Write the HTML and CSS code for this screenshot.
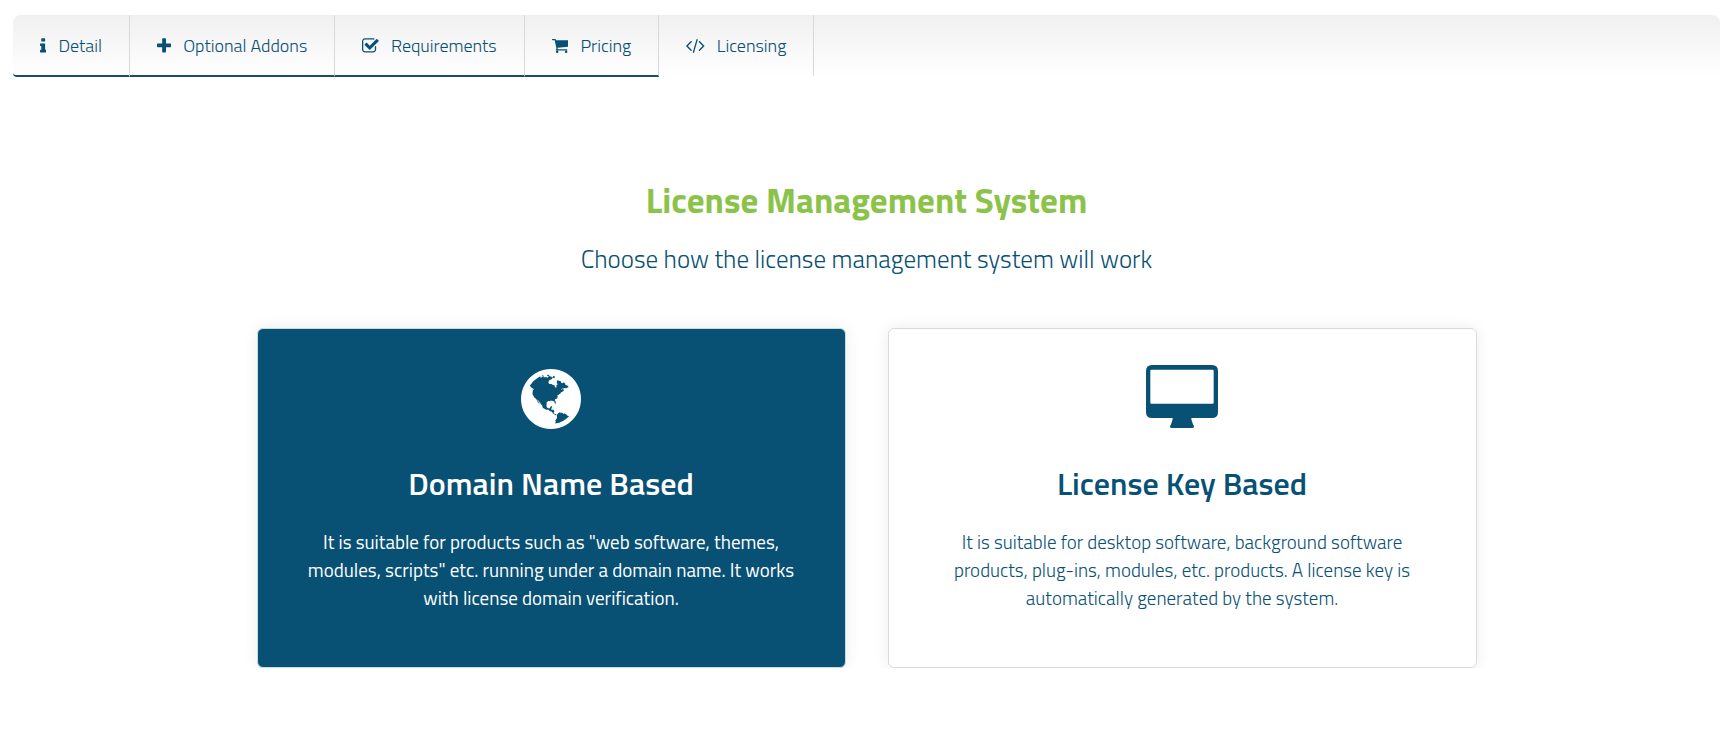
FILE: index.html
```html
<!DOCTYPE html>
<html lang="en">
  <head>
    <meta charset="UTF-8" />
    <meta name="viewport" content="width=device-width, initial-scale=1.0" />
    <title>License Management System</title>
    <link rel="stylesheet" href="styles.css">
  </head>
  <body>
    <nav class="tabs">
      <a class="tab" href="#detail">
        <svg class="tab-icon" viewBox="576 0 640 1792" aria-hidden="true"><path d="M1216 1344v128q0 26-19 45t-45 19h-512q-26 0-45-19t-19-45v-128q0-26 19-45t45-19h64v-384h-64q-26 0-45-19t-19-45v-128q0-26 19-45t45-19h384q26 0 45 19t19 45v576h64q26 0 45 19t19 45zm-128-1152v192q0 26-19 45t-45 19h-256q-26 0-45-19t-19-45v-192q0-26 19-45t45-19h256q26 0 45 19t19 45z"/></svg>
        Detail
      </a>
      <a class="tab" href="#addons">
        <svg class="tab-icon" viewBox="192 0 1408 1792" aria-hidden="true"><path d="M1600 736v192q0 40-28 68t-68 28h-416v416q0 40-28 68t-68 28h-192q-40 0-68-28t-28-68v-416h-416q-40 0-68-28t-28-68v-192q0-40 28-68t68-28h416v-416q0-40 28-68t68-28h192q40 0 68 28t28 68v416h416q40 0 68 28t28 68z"/></svg>
        Optional Addons
      </a>
      <a class="tab" href="#requirements">
        <svg class="tab-icon" viewBox="64 0 1664 1792" aria-hidden="true"><path d="M1472 930v318q0 119-84.5 203.5t-203.5 84.5h-832q-119 0-203.5-84.5t-84.5-203.5v-832q0-119 84.5-203.5t203.5-84.5h832q63 0 117 25 15 7 18 23 3 17-9 29l-49 49q-10 10-23 10-3 0-9-2-23-6-45-6h-832q-66 0-113 47t-47 113v832q0 66 47 113t113 47h832q66 0 113-47t47-113v-254q0-13 9-22l64-64q10-10 23-10 6 0 12 3 20 8 20 29zm231-489l-814 814q-24 24-57 24t-57-24l-430-430q-24-24-24-57t24-57l110-110q24-24 57-24t57 24l263 263 647-647q24-24 57-24t57 24l110 110q24 24 24 57t-24 57z"/></svg>
        Requirements
      </a>
      <a class="tab" href="#pricing">
        <svg class="tab-icon" viewBox="64 64 1664 1792" aria-hidden="true"><path d="M704 1536q0 52-38 90t-90 38-90-38-38-90 38-90 90-38 90 38 38 90zm896 0q0 52-38 90t-90 38-90-38-38-90 38-90 90-38 90 38 38 90zm128-1088v512q0 24-16.5 42.5t-40.5 21.5l-1044 122q13 60 13 70 0 16-24 64h920q26 0 45 19t19 45-19 45-45 19h-1024q-26 0-45-19t-19-45q0-11 8-31.5t16-36 21.5-40 15.5-29.5l-177-823h-204q-26 0-45-19t-19-45 19-45 45-19h256q16 0 28.5 6.5t19.5 15.5 13 24.5 8 26 5.5 29.5 4.5 26h1201q26 0 45 19t19 45z"/></svg>
        Pricing
      </a>
      <a class="tab active" href="#licensing">
        <svg class="tab-icon" viewBox="100 64 1840 1792" aria-hidden="true"><path d="M681 1399l-50 50q-10 10-23 10t-23-10l-466-466q-10-10-10-23t10-23l466-466q10-10 23-10t23 10l50 50q10 10 10 23t-10 23l-393 393 393 393q10 10 10 23t-10 23zm591-1067l-373 1291q-4 13-15.5 19.5t-23.5 2.5l-62-17q-13-4-19.5-15.5t-2.5-24.5l373-1291q4-13 15.5-19.5t23.5-2.5l62 17q13 4 19.5 15.5t2.5 24.5zm657 651l-466 466q-10 10-23 10t-23-10l-50-50q-10-10-10-23t10-23l393-393-393-393q-10-10-10-23t10-23l50-50q10-10 23-10t23 10l466 466q10 10 10 23t-10 23z"/></svg>
        Licensing
      </a>
    </nav>

    <main class="content">
      <h1>License Management System</h1>
      <p class="subtitle">Choose how the license management system will work</p>

      <div class="cards">
        <a class="card selected" href="#domain">
          <svg class="card-icon" viewBox="0 0 1792 1792" aria-hidden="true"><path d="M896 128q209 0 385.5 103t279.5 279.5 103 385.5-103 385.5-279.5 279.5-385.5 103-385.5-103-279.5-279.5-103-385.5 103-385.5 279.5-279.5 385.5-103zm274 521q-2 1-9.5 9.5t-13.5 9.5q2 0 4.5-5t5-11 3.5-7q6-7 22-15 14-6 52-12 34-8 51 11-2-2 9.5-13t14.5-12q3-2 15-4.5t15-7.5l2-22q-12 1-17.5-7t-6.5-21q0 2-6 8 0-7-4.5-8t-11.5 1-9 1q-10-3-15-7.5t-8-16.5-4-15q-2-5-9.5-11t-9.5-10q-1-2-2.5-5.5t-3-6.5-4-5.5-5.5-2.5-7 5-7.5 10-4.5 5q-3-2-6-1.5t-4.5 1-4.5 3-5 3.5q-3 2-8.5 3t-8.5 2q15-5-1-11-10-4-16-3 9-4 7.5-12t-8.5-14h5q-1-4-8.5-8.5t-17.5-8.5-13-6q-8-5-34-9.5t-33-.5q-5 6-4.5 10.5t4 14 3.5 12.5q1 6-5.5 13t-6.5 12q0 7 14 15.5t10 21.5q-3 8-16 16t-16 12q-5 8-1.5 18.5t10.5 16.5q2 2 1.5 4t-3.5 4.5-5.5 4-6.5 3.5l-3 2q-11 5-20.5-6t-13.5-26q-7-25-16-30-23-8-29 1-5-13-41-26-25-9-58-4 6-1 0-15-7-15-19-12 3-6 4-17.5t1-13.5q3-13 12-23 1-1 7-8.5t9.5-13.5.5-6q35 4 50-11 5-5 11.5-17t10.5-17q9-6 14-5.5t14.5 5.5 14.5 5q14 1 15.5-11t-7.5-20q12 1 3-17-4-7-8-9-12-4-27 5-8 4 2 8-1-1-9.5 10.5t-16.5 17.5-16-5q-1-1-5.5-13.5t-9.5-13.5q-8 0-16 15 3-8-11-15t-24-8q19-12-8-27-7-4-20.5-5t-19.5 4q-5 7-5.5 11.5t5 8 10.5 5.5 11.5 4 8.5 3q14 10 8 14-2 1-8.5 3.5t-11.5 4.5-6 4q-3 4 0 14t-2 14q-5-5-9-17.5t-7-16.5q7 9-25 6l-10-1q-4 0-16 2t-20.5 1-13.5-8q-4-8 0-20 1-4 4-2-4-3-11-9.5t-10-8.5q-46 15-94 41 6 1 12-1 5-2 13-6.5t10-5.5q34-14 42-7l5-5q14 16 20 25-7-4-30-1-20 6-22 12 7 12 5 18-4-3-11.5-10t-14.5-11-15-5q-16 0-22 1-146 80-235 222 7 7 12 8 4 1 5 9t2.5 11 11.5-3q9 8 3 19 1-1 44 27 19 17 21 21 3 11-10 18-1-2-9-9t-9-4q-3 5 .5 18.5t10.5 12.5q-7 0-9.5 16t-2.5 35.5-1 23.5l2 1q-3 12 5.5 34.5t21.5 19.5q-13 3 20 43 6 8 8 9 3 2 12 7.5t15 10 10 10.5q4 5 10 22.5t14 23.5q-2 6 9.5 20t10.5 23q-1 0-2.5 1t-2.5 1q3 7 15.5 14t15.5 13q1 3 2 10t3 11 8 2q2-20-24-62-15-25-17-29-3-5-5.5-15.5t-4.5-14.5q2 0 6 1.5t8.5 3.5 7.5 4 2 3q-3 7 2 17.5t12 18.5 17 19 12 13q6 6 14 19.5t0 13.5q9 0 20 10.5t17 19.5q5 8 8 26t5 24q2 7 8.5 13.5t12.5 9.5l16 8 13 7q5 2 18.5 10.5t21.5 11.5q10 4 16 4t14.5-2.5 13.5-3.5q15-2 29 15t21 21q36 19 55 11-2 1 .5 7.5t8 15.5 9 14.5 5.5 8.5q5 6 18 15t18 15q6-4 7-9-3 8 7 20t18 10q14-3 14-32-31 15-49-18 0-1-2.5-5.5t-4-8.5-2.5-8.5 0-7.5 5-3q9 0 10-3.5t-2-12.5-4-13q-1-8-11-20t-12-15q-5 9-16 8t-16-9q0 1-1.5 5.5t-1.5 6.5q-13 0-15-1 1-3 2.5-17.5t3.5-22.5q1-4 5.5-12t7.5-14.5 4-12.5-4.5-9.5-17.5-2.5q-19 1-26 20-1 3-3 10.5t-5 11.5-9 7q-7 3-24 2t-24-5q-13-8-22.5-29t-9.5-37q0-10 2.5-26.5t3-25-5.5-24.5q3-2 9-9.5t10-10.5q2-1 4.5-1.5t4.5 0 4-1.5 3-6q-1-1-4-3-3-3-4-3 7 3 28.5-1.5t27.5 1.5q15 11 22-2 0-1-2.5-9.5t-.5-13.5q5 27 29 9 3 3 15.5 5t17.5 5q3 2 7 5.5t5.5 4.5 5-.5 8.5-6.5q10 14 12 24 11 40 19 44 7 3 11 2t4.5-9.5 0-14-1.5-12.5l-1-8v-18l-1-8q-15-3-18.5-12t1.5-18.5 15-18.5q1-1 8-3.5t15.5-6.5 12.5-8q21-19 15-35 7 0 11-9-1 0-5-3t-7.5-5-4.5-2q9-5 2-16 5-3 7.5-11t7.5-10q9 12 21 2 7-8 1-16 5-7 20.5-10.5t18.5-9.5q7 2 8-2t1-12 3-12q4-5 15-9t13-5l17-11q3-4 0-4 18 2 31-11 10-11-6-20 3-6-3-9.5t-15-5.5q3-1 11.5-.5t10.5-1.5q15-10-7-16-17-5-43 12zm-163 877q206-36 351-189-3-3-12.5-4.5t-12.5-3.5q-18-7-24-8 1-7-2.5-13t-8-9-12.5-8-11-7q-2-2-7-6t-7-5.5-7.5-4.5-8.5-2-10 1l-3 1q-3 1-5.5 2.5t-5.5 3-4 3 0 2.5q-21-17-36-22-5-1-11-5.5t-10.5-7-10-1.5-11.5 7q-5 5-6 15t-2 13q-7-5 0-17.5t2-18.5q-3-6-10.5-4.5t-12 4.5-11.5 8.5-9 6.5-8.5 5.5-8.5 7.5q-3 4-6 12t-5 11q-2-4-11.5-6.5t-9.5-5.5q2 10 4 35t5 38q7 31-12 48-27 25-29 40-4 22 12 26 0 7-8 20.5t-7 21.5q0 6 2 16z"/></svg>
          <h2>Domain Name Based</h2>
          <p>It is suitable for products such as "web software, themes, modules, scripts" etc. running under a domain name. It works with license domain verification.</p>
        </a>
        <a class="card" href="#key">
          <svg class="card-icon" viewBox="0 -3 216 210" aria-hidden="true"><path fill-rule="evenodd" d="M18 0H198Q216 0 216 18V141Q216 159 198 159H136Q136 168 144 184Q145 189 139 189H77Q71 189 72 184Q80 168 80 159H18Q0 159 0 141V18Q0 0 18 0ZM16 14Q13 14 13 17V113Q13 116 16 116H200Q203 116 203 113V17Q203 14 200 14Z"/></svg>
          <h2>License Key Based</h2>
          <p>It is suitable for desktop software, background software products, plug-ins, modules, etc. products. A license key is automatically generated by the system.</p>
        </a>
      </div>
    </main>
  </body>
</html>
```

FILE: styles.css
```css
body {
  margin: 0;
  padding: 15px 15px 0 13px;
  background: #fff;
  color: #085174;
  font-family: "Titillium Web", Roboto, sans-serif;
  font-size: 18px;
  font-weight: 300;
}

a {
  color: inherit;
  text-decoration: none;
}

svg {
  display: block;
  fill: currentColor;
}

.tabs {
  display: flex;
  flex-wrap: wrap;
  border-radius: 8px 8px 0 0;
  background: linear-gradient(#f0f0f0, #fff);
}

.tab {
  display: flex;
  align-items: center;
  gap: 12px;
  padding: 2px 27px 0;
  line-height: 58px;
  border-right: 1px solid #d6d8da;
  border-bottom: 2px solid #1c4c66;
}

.tab:first-child {
  border-radius: 8px 0 0 4px;
}

.tab.active {
  border-bottom-color: transparent;
}

.tab-icon {
  height: 18px;
}

.content {
  max-width: 1220px;
  margin: 0 auto;
  padding-top: 99px;
  text-align: center;
}

h1 {
  margin: 0;
  color: #8bc34a;
  font-size: 35px;
  line-height: 48px;
  font-weight: 700;
}

.subtitle {
  margin: 15px 0 49px;
  font-size: 25px;
  line-height: 40px;
}

.cards {
  display: flex;
  gap: 42px;
}

.card {
  flex: 1;
  box-sizing: border-box;
  padding: 35px 48px 55px;
  border: 1px solid #d9dadc;
  border-radius: 6px;
  box-shadow: 0 0 15px rgba(0, 0, 0, 0.08);
}

.card.selected {
  border-color: #c5dce6;
  background: #085174;
  color: #fff;
  font-weight: 400;
}

.card-icon {
  height: 70px;
  margin: 0 auto;
}

h2 {
  margin: 25px 0 21px;
  font-size: 32px;
  line-height: 48px;
  font-weight: 600;
}

.card p {
  margin: 0;
  font-size: 19px;
  line-height: 28px;
}

@media screen and (max-width: 800px) {
  .cards {
    flex-direction: column;
  }
}
```
